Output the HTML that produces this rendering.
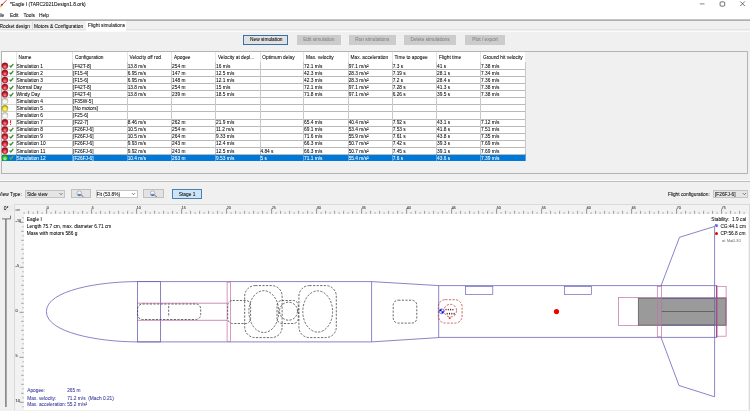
<!DOCTYPE html>
<html><head><meta charset="utf-8"><style>
html,body{margin:0;padding:0;width:750px;height:411px;overflow:hidden;background:#f0f0f0}
.t{position:absolute;font-family:"Liberation Sans",sans-serif;line-height:1;white-space:pre}
</style></head><body>
<div style="position:absolute;left:0.00px;top:0.00px;width:750.00px;height:19.00px;background:#fff"></div><div style="position:absolute;left:0.00px;top:19.00px;width:750.00px;height:1.00px;background:#c4c4c4"></div><div style="position:absolute;left:0.00px;top:20.00px;width:750.00px;height:1.00px;background:#b0b0b0"></div><div style="position:absolute;left:0.00px;top:21.00px;width:750.00px;height:390.00px;background:#f0f0f0"></div><div style="position:absolute;left:0.00px;top:29.00px;width:750.00px;height:1.00px;background:#e3e3e3"></div><div style="position:absolute;left:0.00px;top:31.00px;width:750.00px;height:1.00px;background:#fbfbfb"></div><div style="position:absolute;left:86.00px;top:21.00px;width:40.30px;height:10.00px;background:#fff"></div><div style="position:absolute;left:32.00px;top:22.00px;width:0.60px;height:8.00px;background:#d9d9d9"></div><div style="position:absolute;left:243.00px;top:35.00px;width:45.00px;height:9.50px;background:#e1e1e1;border:1px solid #3a6da4;box-sizing:border-box;box-shadow:inset 0 0 0 0.6px #dfeaf5"></div><div style="position:absolute;left:296.90px;top:35.00px;width:43.70px;height:9.50px;background:#cccccc"></div><div style="position:absolute;left:348.90px;top:35.00px;width:46.80px;height:9.50px;background:#cccccc"></div><div style="position:absolute;left:404.30px;top:35.00px;width:51.50px;height:9.50px;background:#cccccc"></div><div style="position:absolute;left:465.00px;top:35.00px;width:40.20px;height:9.50px;background:#cccccc"></div><div style="position:absolute;left:1.00px;top:51.00px;width:746.60px;height:122.70px;border:1px solid #b4b4b4;box-sizing:border-box"></div><div style="position:absolute;left:1.50px;top:52.20px;width:523.00px;height:10.10px;background:#fff"></div><div style="position:absolute;left:15.90px;top:52.20px;width:0.70px;height:10.10px;background:#e6e6e6"></div><div style="position:absolute;left:72.40px;top:52.20px;width:0.70px;height:10.10px;background:#e6e6e6"></div><div style="position:absolute;left:127.00px;top:52.20px;width:0.70px;height:10.10px;background:#e6e6e6"></div><div style="position:absolute;left:171.40px;top:52.20px;width:0.70px;height:10.10px;background:#e6e6e6"></div><div style="position:absolute;left:215.30px;top:52.20px;width:0.70px;height:10.10px;background:#e6e6e6"></div><div style="position:absolute;left:259.70px;top:52.20px;width:0.70px;height:10.10px;background:#e6e6e6"></div><div style="position:absolute;left:303.40px;top:52.20px;width:0.70px;height:10.10px;background:#e6e6e6"></div><div style="position:absolute;left:348.00px;top:52.20px;width:0.70px;height:10.10px;background:#e6e6e6"></div><div style="position:absolute;left:392.00px;top:52.20px;width:0.70px;height:10.10px;background:#e6e6e6"></div><div style="position:absolute;left:436.40px;top:52.20px;width:0.70px;height:10.10px;background:#e6e6e6"></div><div style="position:absolute;left:480.40px;top:52.20px;width:0.70px;height:10.10px;background:#e6e6e6"></div><div style="position:absolute;left:1.50px;top:62.00px;width:523.00px;height:0.60px;background:#dedede"></div><div style="position:absolute;left:1.50px;top:62.30px;width:523.00px;height:98.98px;background:#fff"></div><div style="position:absolute;left:1.50px;top:154.21px;width:523.00px;height:7.07px;background:#0078d7"></div><div style="position:absolute;left:1.50px;top:69.07px;width:14.70px;height:0.70px;background:#d4d4d4"></div><div style="position:absolute;left:16.20px;top:69.07px;width:508.80px;height:0.70px;background:#b9b9b9"></div><div style="position:absolute;left:1.50px;top:76.14px;width:14.70px;height:0.70px;background:#d4d4d4"></div><div style="position:absolute;left:16.20px;top:76.14px;width:508.80px;height:0.70px;background:#b9b9b9"></div><div style="position:absolute;left:1.50px;top:83.21px;width:14.70px;height:0.70px;background:#d4d4d4"></div><div style="position:absolute;left:16.20px;top:83.21px;width:508.80px;height:0.70px;background:#b9b9b9"></div><div style="position:absolute;left:1.50px;top:90.28px;width:14.70px;height:0.70px;background:#d4d4d4"></div><div style="position:absolute;left:16.20px;top:90.28px;width:508.80px;height:0.70px;background:#b9b9b9"></div><div style="position:absolute;left:1.50px;top:97.35px;width:14.70px;height:0.70px;background:#d4d4d4"></div><div style="position:absolute;left:16.20px;top:97.35px;width:508.80px;height:0.70px;background:#b9b9b9"></div><div style="position:absolute;left:1.50px;top:104.42px;width:14.70px;height:0.70px;background:#d4d4d4"></div><div style="position:absolute;left:16.20px;top:104.42px;width:508.80px;height:0.70px;background:#b9b9b9"></div><div style="position:absolute;left:1.50px;top:111.49px;width:14.70px;height:0.70px;background:#d4d4d4"></div><div style="position:absolute;left:16.20px;top:111.49px;width:508.80px;height:0.70px;background:#b9b9b9"></div><div style="position:absolute;left:1.50px;top:118.56px;width:14.70px;height:0.70px;background:#d4d4d4"></div><div style="position:absolute;left:16.20px;top:118.56px;width:508.80px;height:0.70px;background:#b9b9b9"></div><div style="position:absolute;left:1.50px;top:125.63px;width:14.70px;height:0.70px;background:#d4d4d4"></div><div style="position:absolute;left:16.20px;top:125.63px;width:508.80px;height:0.70px;background:#b9b9b9"></div><div style="position:absolute;left:1.50px;top:132.70px;width:14.70px;height:0.70px;background:#d4d4d4"></div><div style="position:absolute;left:16.20px;top:132.70px;width:508.80px;height:0.70px;background:#b9b9b9"></div><div style="position:absolute;left:1.50px;top:139.77px;width:14.70px;height:0.70px;background:#d4d4d4"></div><div style="position:absolute;left:16.20px;top:139.77px;width:508.80px;height:0.70px;background:#b9b9b9"></div><div style="position:absolute;left:1.50px;top:146.84px;width:14.70px;height:0.70px;background:#d4d4d4"></div><div style="position:absolute;left:16.20px;top:146.84px;width:508.80px;height:0.70px;background:#b9b9b9"></div><div style="position:absolute;left:1.50px;top:153.91px;width:14.70px;height:0.70px;background:#d4d4d4"></div><div style="position:absolute;left:16.20px;top:153.91px;width:508.80px;height:0.70px;background:#b9b9b9"></div><div style="position:absolute;left:15.90px;top:62.30px;width:0.70px;height:91.91px;background:#c8c8c8"></div><div style="position:absolute;left:72.40px;top:62.30px;width:0.70px;height:91.91px;background:#c8c8c8"></div><div style="position:absolute;left:127.00px;top:62.30px;width:0.70px;height:91.91px;background:#c8c8c8"></div><div style="position:absolute;left:171.40px;top:62.30px;width:0.70px;height:91.91px;background:#c8c8c8"></div><div style="position:absolute;left:215.30px;top:62.30px;width:0.70px;height:91.91px;background:#c8c8c8"></div><div style="position:absolute;left:259.70px;top:62.30px;width:0.70px;height:91.91px;background:#c8c8c8"></div><div style="position:absolute;left:303.40px;top:62.30px;width:0.70px;height:91.91px;background:#c8c8c8"></div><div style="position:absolute;left:348.00px;top:62.30px;width:0.70px;height:91.91px;background:#c8c8c8"></div><div style="position:absolute;left:392.00px;top:62.30px;width:0.70px;height:91.91px;background:#c8c8c8"></div><div style="position:absolute;left:436.40px;top:62.30px;width:0.70px;height:91.91px;background:#c8c8c8"></div><div style="position:absolute;left:480.40px;top:62.30px;width:0.70px;height:91.91px;background:#c8c8c8"></div><div style="position:absolute;left:524.70px;top:62.30px;width:0.70px;height:91.91px;background:#c8c8c8"></div><div style="position:absolute;left:15.90px;top:154.21px;width:0.70px;height:7.07px;background:#5a9fe0"></div><div style="position:absolute;left:72.40px;top:154.21px;width:0.70px;height:7.07px;background:#5a9fe0"></div><div style="position:absolute;left:127.00px;top:154.21px;width:0.70px;height:7.07px;background:#5a9fe0"></div><div style="position:absolute;left:171.40px;top:154.21px;width:0.70px;height:7.07px;background:#5a9fe0"></div><div style="position:absolute;left:215.30px;top:154.21px;width:0.70px;height:7.07px;background:#5a9fe0"></div><div style="position:absolute;left:259.70px;top:154.21px;width:0.70px;height:7.07px;background:#5a9fe0"></div><div style="position:absolute;left:303.40px;top:154.21px;width:0.70px;height:7.07px;background:#5a9fe0"></div><div style="position:absolute;left:348.00px;top:154.21px;width:0.70px;height:7.07px;background:#5a9fe0"></div><div style="position:absolute;left:392.00px;top:154.21px;width:0.70px;height:7.07px;background:#5a9fe0"></div><div style="position:absolute;left:436.40px;top:154.21px;width:0.70px;height:7.07px;background:#5a9fe0"></div><div style="position:absolute;left:480.40px;top:154.21px;width:0.70px;height:7.07px;background:#5a9fe0"></div><div style="position:absolute;left:524.70px;top:154.21px;width:0.70px;height:7.07px;background:#5a9fe0"></div><svg style="position:absolute;left:9px;top:63.30px" width="5" height="5" viewBox="0 0 5 5"><path d="M0.6 2.6 L1.8 4.0 L4.3 1.0" fill="none" stroke="#3a8e2e" stroke-width="1.2"/></svg><svg style="position:absolute;left:9px;top:70.37px" width="5" height="5" viewBox="0 0 5 5"><path d="M0.6 2.6 L1.8 4.0 L4.3 1.0" fill="none" stroke="#3a8e2e" stroke-width="1.2"/></svg><svg style="position:absolute;left:9px;top:77.44px" width="5" height="5" viewBox="0 0 5 5"><path d="M0.6 2.6 L1.8 4.0 L4.3 1.0" fill="none" stroke="#3a8e2e" stroke-width="1.2"/></svg><svg style="position:absolute;left:9px;top:84.51px" width="5" height="5" viewBox="0 0 5 5"><path d="M0.6 2.6 L1.8 4.0 L4.3 1.0" fill="none" stroke="#3a8e2e" stroke-width="1.2"/></svg><svg style="position:absolute;left:9px;top:91.58px" width="5" height="5" viewBox="0 0 5 5"><path d="M0.6 2.6 L1.8 4.0 L4.3 1.0" fill="none" stroke="#3a8e2e" stroke-width="1.2"/></svg><svg style="position:absolute;left:9px;top:126.93px" width="5" height="5" viewBox="0 0 5 5"><path d="M0.6 2.6 L1.8 4.0 L4.3 1.0" fill="none" stroke="#3a8e2e" stroke-width="1.2"/></svg><svg style="position:absolute;left:9px;top:134.00px" width="5" height="5" viewBox="0 0 5 5"><path d="M0.6 2.6 L1.8 4.0 L4.3 1.0" fill="none" stroke="#3a8e2e" stroke-width="1.2"/></svg><svg style="position:absolute;left:9px;top:141.07px" width="5" height="5" viewBox="0 0 5 5"><path d="M0.6 2.6 L1.8 4.0 L4.3 1.0" fill="none" stroke="#3a8e2e" stroke-width="1.2"/></svg><svg style="position:absolute;left:9px;top:148.14px" width="5" height="5" viewBox="0 0 5 5"><path d="M0.6 2.6 L1.8 4.0 L4.3 1.0" fill="none" stroke="#3a8e2e" stroke-width="1.2"/></svg><svg style="position:absolute;left:9px;top:155.21px" width="5" height="5" viewBox="0 0 5 5"><path d="M0.6 2.6 L1.8 4.0 L4.3 1.0" fill="none" stroke="#60b060" stroke-width="1.2"/></svg><svg style="position:absolute;left:0;top:0" width="20" height="170"><defs><radialGradient id="br" cx="0.5" cy="0.68" r="0.6"><stop offset="0" stop-color="#ff8a98"/><stop offset="0.55" stop-color="#d42a3a"/><stop offset="1" stop-color="#8a0c18"/></radialGradient><radialGradient id="bg" cx="0.5" cy="0.68" r="0.6"><stop offset="0" stop-color="#c0ffc0"/><stop offset="0.55" stop-color="#3ad04a"/><stop offset="1" stop-color="#1a8a24"/></radialGradient><radialGradient id="by" cx="0.5" cy="0.68" r="0.6"><stop offset="0" stop-color="#ffffb0"/><stop offset="0.55" stop-color="#f0e030"/><stop offset="1" stop-color="#a89a10"/></radialGradient><radialGradient id="bw" cx="0.5" cy="0.68" r="0.6"><stop offset="0" stop-color="#ffffff"/><stop offset="0.55" stop-color="#f4f4f4"/><stop offset="1" stop-color="#c0c0c0"/></radialGradient></defs><circle cx="4.9" cy="65.85" r="3.1" fill="url(#br)" stroke="#8a1018" stroke-width="0.4"/><circle cx="4.9" cy="72.92" r="3.1" fill="url(#br)" stroke="#8a1018" stroke-width="0.4"/><circle cx="4.9" cy="79.99" r="3.1" fill="url(#br)" stroke="#8a1018" stroke-width="0.4"/><circle cx="4.9" cy="87.06" r="3.1" fill="url(#br)" stroke="#8a1018" stroke-width="0.4"/><circle cx="4.9" cy="94.13" r="3.1" fill="url(#br)" stroke="#8a1018" stroke-width="0.4"/><circle cx="4.9" cy="101.20" r="3.1" fill="url(#bw)" stroke="#a0a0a0" stroke-width="0.4"/><circle cx="4.9" cy="108.27" r="3.1" fill="url(#by)" stroke="#8a8010" stroke-width="0.4"/><circle cx="4.9" cy="115.34" r="3.1" fill="url(#bw)" stroke="#a0a0a0" stroke-width="0.4"/><circle cx="4.9" cy="122.41" r="3.1" fill="url(#br)" stroke="#8a1018" stroke-width="0.4"/><rect x="10.1" y="120.16" width="1.0" height="3.1" fill="#e01a1a"/><rect x="10.1" y="123.86" width="1.0" height="1.0" fill="#e01a1a"/><circle cx="4.9" cy="129.48" r="3.1" fill="url(#br)" stroke="#8a1018" stroke-width="0.4"/><circle cx="4.9" cy="136.55" r="3.1" fill="url(#br)" stroke="#8a1018" stroke-width="0.4"/><circle cx="4.9" cy="143.62" r="3.1" fill="url(#br)" stroke="#8a1018" stroke-width="0.4"/><circle cx="4.9" cy="150.69" r="3.1" fill="url(#br)" stroke="#8a1018" stroke-width="0.4"/><circle cx="4.9" cy="157.76" r="3.1" fill="url(#bg)" stroke="#1a7a20" stroke-width="0.4"/></svg><div style="position:absolute;left:0.00px;top:180.00px;width:750.00px;height:0.80px;background:#fafafa"></div><div style="position:absolute;left:0.00px;top:181.30px;width:750.00px;height:1.20px;background:#bdbdbd"></div><div style="position:absolute;left:25.10px;top:189.70px;width:40.30px;height:8.80px;background:#e5e5e5;border:0.5px solid #c4c4c4;box-sizing:border-box"></div><div style="position:absolute;left:70.60px;top:189.40px;width:20.90px;height:9.10px;background:#e3e3e3;border:0.5px solid #c0c0c0;box-sizing:border-box"></div><div style="position:absolute;left:95.60px;top:189.70px;width:42.90px;height:8.80px;background:#fff;border:0.5px solid #c4c4c4;box-sizing:border-box"></div><div style="position:absolute;left:142.80px;top:189.40px;width:20.80px;height:9.10px;background:#e3e3e3;border:0.5px solid #c0c0c0;box-sizing:border-box"></div><div style="position:absolute;left:172.40px;top:189.40px;width:29.30px;height:9.30px;background:#cce4f7;border:0.7px solid #4f7fae;box-sizing:border-box"></div><div style="position:absolute;left:712.90px;top:189.60px;width:35.50px;height:8.80px;background:#e5e5e5;border:0.5px solid #c4c4c4;box-sizing:border-box"></div><div style="position:absolute;left:1.50px;top:204.50px;width:11.00px;height:7.50px;background:#ececec"></div><div style="position:absolute;left:14.20px;top:204.30px;width:734.00px;height:204.60px;background:#f2f2f2;border-left:0.6px solid #dadada;border-top:0.6px solid #dadada;border-right:0.6px solid #dadada"></div><div style="position:absolute;left:23.70px;top:214.00px;width:724.20px;height:195.50px;background:#fff"></div><svg style="position:absolute;left:0;top:0;will-change:transform" width="750" height="411" viewBox="0 0 750 411"><line x1="699.8" y1="3.9" x2="704.5" y2="3.9" stroke="#333" stroke-width="0.6"/><rect x="720.1" y="1.9" width="4.6" height="4.2" rx="0.8" fill="none" stroke="#333" stroke-width="0.7"/><path d="M740.3 1.5 L744.8 6 M744.8 1.5 L740.3 6" stroke="#333" stroke-width="0.7"/><path d="M1.6 5.2 L6.4 0.3" stroke="#b82828" stroke-width="0.9"/><path d="M1.2 5.6 L2.6 4.2" stroke="#8a1010" stroke-width="1.4"/><ellipse cx="0.5" cy="6.4" rx="1.3" ry="0.9" fill="#f0c040"/><path d="M59.5 193.1 L61 194.7 L62.5 193.1" fill="none" stroke="#333" stroke-width="0.6"/><path d="M132.0 193.1 L133.5 194.7 L135.0 193.1" fill="none" stroke="#333" stroke-width="0.6"/><path d="M742.9 193.1 L744.4 194.7 L745.9 193.1" fill="none" stroke="#333" stroke-width="0.6"/><defs><linearGradient id="mg" x1="0" y1="0" x2="0" y2="1"><stop offset="0" stop-color="#c8d4f0"/><stop offset="0.5" stop-color="#6a88d0"/><stop offset="1" stop-color="#12308a"/></linearGradient></defs><path d="M80.89999999999999 194.8 L83.5 196.9" stroke="#5a5a5a" stroke-width="0.8"/><circle cx="79.3" cy="193.2" r="2.3" fill="#f4f6fa" stroke="#777" stroke-width="0.45"/><path d="M77.0 193.4 A2.3 2.3 0 0 0 81.6 193.4 Z" fill="url(#mg)"/><path d="M154.2 194.8 L156.79999999999998 196.9" stroke="#5a5a5a" stroke-width="0.8"/><circle cx="152.6" cy="193.2" r="2.3" fill="#f4f6fa" stroke="#777" stroke-width="0.45"/><path d="M150.29999999999998 193.4 A2.3 2.3 0 0 0 154.9 193.4 Z" fill="url(#mg)"/><path d="M2 218.9 L10.5 218.9 L10.5 215.6" fill="none" stroke="#555" stroke-width="0.8"/><line x1="5.9" y1="219" x2="5.9" y2="407" stroke="#6a6a6a" stroke-width="1.3"/><line x1="24.10" y1="212.1" x2="24.10" y2="213.9" stroke="#777" stroke-width="0.6"/><line x1="28.60" y1="210.8" x2="28.60" y2="213.9" stroke="#666" stroke-width="0.6"/><line x1="33.10" y1="212.1" x2="33.10" y2="213.9" stroke="#777" stroke-width="0.6"/><line x1="37.60" y1="210.8" x2="37.60" y2="213.9" stroke="#666" stroke-width="0.6"/><line x1="42.10" y1="212.1" x2="42.10" y2="213.9" stroke="#777" stroke-width="0.6"/><line x1="46.60" y1="208.5" x2="46.60" y2="213.9" stroke="#555" stroke-width="0.6"/><line x1="51.10" y1="212.1" x2="51.10" y2="213.9" stroke="#777" stroke-width="0.6"/><line x1="55.60" y1="210.8" x2="55.60" y2="213.9" stroke="#666" stroke-width="0.6"/><line x1="60.10" y1="212.1" x2="60.10" y2="213.9" stroke="#777" stroke-width="0.6"/><line x1="64.60" y1="210.8" x2="64.60" y2="213.9" stroke="#666" stroke-width="0.6"/><line x1="69.10" y1="212.1" x2="69.10" y2="213.9" stroke="#777" stroke-width="0.6"/><line x1="73.60" y1="210.8" x2="73.60" y2="213.9" stroke="#666" stroke-width="0.6"/><line x1="78.10" y1="212.1" x2="78.10" y2="213.9" stroke="#777" stroke-width="0.6"/><line x1="82.60" y1="210.8" x2="82.60" y2="213.9" stroke="#666" stroke-width="0.6"/><line x1="87.10" y1="212.1" x2="87.10" y2="213.9" stroke="#777" stroke-width="0.6"/><line x1="91.60" y1="208.5" x2="91.60" y2="213.9" stroke="#555" stroke-width="0.6"/><line x1="96.10" y1="212.1" x2="96.10" y2="213.9" stroke="#777" stroke-width="0.6"/><line x1="100.60" y1="210.8" x2="100.60" y2="213.9" stroke="#666" stroke-width="0.6"/><line x1="105.10" y1="212.1" x2="105.10" y2="213.9" stroke="#777" stroke-width="0.6"/><line x1="109.60" y1="210.8" x2="109.60" y2="213.9" stroke="#666" stroke-width="0.6"/><line x1="114.10" y1="212.1" x2="114.10" y2="213.9" stroke="#777" stroke-width="0.6"/><line x1="118.60" y1="210.8" x2="118.60" y2="213.9" stroke="#666" stroke-width="0.6"/><line x1="123.10" y1="212.1" x2="123.10" y2="213.9" stroke="#777" stroke-width="0.6"/><line x1="127.60" y1="210.8" x2="127.60" y2="213.9" stroke="#666" stroke-width="0.6"/><line x1="132.10" y1="212.1" x2="132.10" y2="213.9" stroke="#777" stroke-width="0.6"/><line x1="136.60" y1="208.5" x2="136.60" y2="213.9" stroke="#555" stroke-width="0.6"/><line x1="141.10" y1="212.1" x2="141.10" y2="213.9" stroke="#777" stroke-width="0.6"/><line x1="145.60" y1="210.8" x2="145.60" y2="213.9" stroke="#666" stroke-width="0.6"/><line x1="150.10" y1="212.1" x2="150.10" y2="213.9" stroke="#777" stroke-width="0.6"/><line x1="154.60" y1="210.8" x2="154.60" y2="213.9" stroke="#666" stroke-width="0.6"/><line x1="159.10" y1="212.1" x2="159.10" y2="213.9" stroke="#777" stroke-width="0.6"/><line x1="163.60" y1="210.8" x2="163.60" y2="213.9" stroke="#666" stroke-width="0.6"/><line x1="168.10" y1="212.1" x2="168.10" y2="213.9" stroke="#777" stroke-width="0.6"/><line x1="172.60" y1="210.8" x2="172.60" y2="213.9" stroke="#666" stroke-width="0.6"/><line x1="177.10" y1="212.1" x2="177.10" y2="213.9" stroke="#777" stroke-width="0.6"/><line x1="181.60" y1="208.5" x2="181.60" y2="213.9" stroke="#555" stroke-width="0.6"/><line x1="186.10" y1="212.1" x2="186.10" y2="213.9" stroke="#777" stroke-width="0.6"/><line x1="190.60" y1="210.8" x2="190.60" y2="213.9" stroke="#666" stroke-width="0.6"/><line x1="195.10" y1="212.1" x2="195.10" y2="213.9" stroke="#777" stroke-width="0.6"/><line x1="199.60" y1="210.8" x2="199.60" y2="213.9" stroke="#666" stroke-width="0.6"/><line x1="204.10" y1="212.1" x2="204.10" y2="213.9" stroke="#777" stroke-width="0.6"/><line x1="208.60" y1="210.8" x2="208.60" y2="213.9" stroke="#666" stroke-width="0.6"/><line x1="213.10" y1="212.1" x2="213.10" y2="213.9" stroke="#777" stroke-width="0.6"/><line x1="217.60" y1="210.8" x2="217.60" y2="213.9" stroke="#666" stroke-width="0.6"/><line x1="222.10" y1="212.1" x2="222.10" y2="213.9" stroke="#777" stroke-width="0.6"/><line x1="226.60" y1="208.5" x2="226.60" y2="213.9" stroke="#555" stroke-width="0.6"/><line x1="231.10" y1="212.1" x2="231.10" y2="213.9" stroke="#777" stroke-width="0.6"/><line x1="235.60" y1="210.8" x2="235.60" y2="213.9" stroke="#666" stroke-width="0.6"/><line x1="240.10" y1="212.1" x2="240.10" y2="213.9" stroke="#777" stroke-width="0.6"/><line x1="244.60" y1="210.8" x2="244.60" y2="213.9" stroke="#666" stroke-width="0.6"/><line x1="249.10" y1="212.1" x2="249.10" y2="213.9" stroke="#777" stroke-width="0.6"/><line x1="253.60" y1="210.8" x2="253.60" y2="213.9" stroke="#666" stroke-width="0.6"/><line x1="258.10" y1="212.1" x2="258.10" y2="213.9" stroke="#777" stroke-width="0.6"/><line x1="262.60" y1="210.8" x2="262.60" y2="213.9" stroke="#666" stroke-width="0.6"/><line x1="267.10" y1="212.1" x2="267.10" y2="213.9" stroke="#777" stroke-width="0.6"/><line x1="271.60" y1="208.5" x2="271.60" y2="213.9" stroke="#555" stroke-width="0.6"/><line x1="276.10" y1="212.1" x2="276.10" y2="213.9" stroke="#777" stroke-width="0.6"/><line x1="280.60" y1="210.8" x2="280.60" y2="213.9" stroke="#666" stroke-width="0.6"/><line x1="285.10" y1="212.1" x2="285.10" y2="213.9" stroke="#777" stroke-width="0.6"/><line x1="289.60" y1="210.8" x2="289.60" y2="213.9" stroke="#666" stroke-width="0.6"/><line x1="294.10" y1="212.1" x2="294.10" y2="213.9" stroke="#777" stroke-width="0.6"/><line x1="298.60" y1="210.8" x2="298.60" y2="213.9" stroke="#666" stroke-width="0.6"/><line x1="303.10" y1="212.1" x2="303.10" y2="213.9" stroke="#777" stroke-width="0.6"/><line x1="307.60" y1="210.8" x2="307.60" y2="213.9" stroke="#666" stroke-width="0.6"/><line x1="312.10" y1="212.1" x2="312.10" y2="213.9" stroke="#777" stroke-width="0.6"/><line x1="316.60" y1="208.5" x2="316.60" y2="213.9" stroke="#555" stroke-width="0.6"/><line x1="321.10" y1="212.1" x2="321.10" y2="213.9" stroke="#777" stroke-width="0.6"/><line x1="325.60" y1="210.8" x2="325.60" y2="213.9" stroke="#666" stroke-width="0.6"/><line x1="330.10" y1="212.1" x2="330.10" y2="213.9" stroke="#777" stroke-width="0.6"/><line x1="334.60" y1="210.8" x2="334.60" y2="213.9" stroke="#666" stroke-width="0.6"/><line x1="339.10" y1="212.1" x2="339.10" y2="213.9" stroke="#777" stroke-width="0.6"/><line x1="343.60" y1="210.8" x2="343.60" y2="213.9" stroke="#666" stroke-width="0.6"/><line x1="348.10" y1="212.1" x2="348.10" y2="213.9" stroke="#777" stroke-width="0.6"/><line x1="352.60" y1="210.8" x2="352.60" y2="213.9" stroke="#666" stroke-width="0.6"/><line x1="357.10" y1="212.1" x2="357.10" y2="213.9" stroke="#777" stroke-width="0.6"/><line x1="361.60" y1="208.5" x2="361.60" y2="213.9" stroke="#555" stroke-width="0.6"/><line x1="366.10" y1="212.1" x2="366.10" y2="213.9" stroke="#777" stroke-width="0.6"/><line x1="370.60" y1="210.8" x2="370.60" y2="213.9" stroke="#666" stroke-width="0.6"/><line x1="375.10" y1="212.1" x2="375.10" y2="213.9" stroke="#777" stroke-width="0.6"/><line x1="379.60" y1="210.8" x2="379.60" y2="213.9" stroke="#666" stroke-width="0.6"/><line x1="384.10" y1="212.1" x2="384.10" y2="213.9" stroke="#777" stroke-width="0.6"/><line x1="388.60" y1="210.8" x2="388.60" y2="213.9" stroke="#666" stroke-width="0.6"/><line x1="393.10" y1="212.1" x2="393.10" y2="213.9" stroke="#777" stroke-width="0.6"/><line x1="397.60" y1="210.8" x2="397.60" y2="213.9" stroke="#666" stroke-width="0.6"/><line x1="402.10" y1="212.1" x2="402.10" y2="213.9" stroke="#777" stroke-width="0.6"/><line x1="406.60" y1="208.5" x2="406.60" y2="213.9" stroke="#555" stroke-width="0.6"/><line x1="411.10" y1="212.1" x2="411.10" y2="213.9" stroke="#777" stroke-width="0.6"/><line x1="415.60" y1="210.8" x2="415.60" y2="213.9" stroke="#666" stroke-width="0.6"/><line x1="420.10" y1="212.1" x2="420.10" y2="213.9" stroke="#777" stroke-width="0.6"/><line x1="424.60" y1="210.8" x2="424.60" y2="213.9" stroke="#666" stroke-width="0.6"/><line x1="429.10" y1="212.1" x2="429.10" y2="213.9" stroke="#777" stroke-width="0.6"/><line x1="433.60" y1="210.8" x2="433.60" y2="213.9" stroke="#666" stroke-width="0.6"/><line x1="438.10" y1="212.1" x2="438.10" y2="213.9" stroke="#777" stroke-width="0.6"/><line x1="442.60" y1="210.8" x2="442.60" y2="213.9" stroke="#666" stroke-width="0.6"/><line x1="447.10" y1="212.1" x2="447.10" y2="213.9" stroke="#777" stroke-width="0.6"/><line x1="451.60" y1="208.5" x2="451.60" y2="213.9" stroke="#555" stroke-width="0.6"/><line x1="456.10" y1="212.1" x2="456.10" y2="213.9" stroke="#777" stroke-width="0.6"/><line x1="460.60" y1="210.8" x2="460.60" y2="213.9" stroke="#666" stroke-width="0.6"/><line x1="465.10" y1="212.1" x2="465.10" y2="213.9" stroke="#777" stroke-width="0.6"/><line x1="469.60" y1="210.8" x2="469.60" y2="213.9" stroke="#666" stroke-width="0.6"/><line x1="474.10" y1="212.1" x2="474.10" y2="213.9" stroke="#777" stroke-width="0.6"/><line x1="478.60" y1="210.8" x2="478.60" y2="213.9" stroke="#666" stroke-width="0.6"/><line x1="483.10" y1="212.1" x2="483.10" y2="213.9" stroke="#777" stroke-width="0.6"/><line x1="487.60" y1="210.8" x2="487.60" y2="213.9" stroke="#666" stroke-width="0.6"/><line x1="492.10" y1="212.1" x2="492.10" y2="213.9" stroke="#777" stroke-width="0.6"/><line x1="496.60" y1="208.5" x2="496.60" y2="213.9" stroke="#555" stroke-width="0.6"/><line x1="501.10" y1="212.1" x2="501.10" y2="213.9" stroke="#777" stroke-width="0.6"/><line x1="505.60" y1="210.8" x2="505.60" y2="213.9" stroke="#666" stroke-width="0.6"/><line x1="510.10" y1="212.1" x2="510.10" y2="213.9" stroke="#777" stroke-width="0.6"/><line x1="514.60" y1="210.8" x2="514.60" y2="213.9" stroke="#666" stroke-width="0.6"/><line x1="519.10" y1="212.1" x2="519.10" y2="213.9" stroke="#777" stroke-width="0.6"/><line x1="523.60" y1="210.8" x2="523.60" y2="213.9" stroke="#666" stroke-width="0.6"/><line x1="528.10" y1="212.1" x2="528.10" y2="213.9" stroke="#777" stroke-width="0.6"/><line x1="532.60" y1="210.8" x2="532.60" y2="213.9" stroke="#666" stroke-width="0.6"/><line x1="537.10" y1="212.1" x2="537.10" y2="213.9" stroke="#777" stroke-width="0.6"/><line x1="541.60" y1="208.5" x2="541.60" y2="213.9" stroke="#555" stroke-width="0.6"/><line x1="546.10" y1="212.1" x2="546.10" y2="213.9" stroke="#777" stroke-width="0.6"/><line x1="550.60" y1="210.8" x2="550.60" y2="213.9" stroke="#666" stroke-width="0.6"/><line x1="555.10" y1="212.1" x2="555.10" y2="213.9" stroke="#777" stroke-width="0.6"/><line x1="559.60" y1="210.8" x2="559.60" y2="213.9" stroke="#666" stroke-width="0.6"/><line x1="564.10" y1="212.1" x2="564.10" y2="213.9" stroke="#777" stroke-width="0.6"/><line x1="568.60" y1="210.8" x2="568.60" y2="213.9" stroke="#666" stroke-width="0.6"/><line x1="573.10" y1="212.1" x2="573.10" y2="213.9" stroke="#777" stroke-width="0.6"/><line x1="577.60" y1="210.8" x2="577.60" y2="213.9" stroke="#666" stroke-width="0.6"/><line x1="582.10" y1="212.1" x2="582.10" y2="213.9" stroke="#777" stroke-width="0.6"/><line x1="586.60" y1="208.5" x2="586.60" y2="213.9" stroke="#555" stroke-width="0.6"/><line x1="591.10" y1="212.1" x2="591.10" y2="213.9" stroke="#777" stroke-width="0.6"/><line x1="595.60" y1="210.8" x2="595.60" y2="213.9" stroke="#666" stroke-width="0.6"/><line x1="600.10" y1="212.1" x2="600.10" y2="213.9" stroke="#777" stroke-width="0.6"/><line x1="604.60" y1="210.8" x2="604.60" y2="213.9" stroke="#666" stroke-width="0.6"/><line x1="609.10" y1="212.1" x2="609.10" y2="213.9" stroke="#777" stroke-width="0.6"/><line x1="613.60" y1="210.8" x2="613.60" y2="213.9" stroke="#666" stroke-width="0.6"/><line x1="618.10" y1="212.1" x2="618.10" y2="213.9" stroke="#777" stroke-width="0.6"/><line x1="622.60" y1="210.8" x2="622.60" y2="213.9" stroke="#666" stroke-width="0.6"/><line x1="627.10" y1="212.1" x2="627.10" y2="213.9" stroke="#777" stroke-width="0.6"/><line x1="631.60" y1="208.5" x2="631.60" y2="213.9" stroke="#555" stroke-width="0.6"/><line x1="636.10" y1="212.1" x2="636.10" y2="213.9" stroke="#777" stroke-width="0.6"/><line x1="640.60" y1="210.8" x2="640.60" y2="213.9" stroke="#666" stroke-width="0.6"/><line x1="645.10" y1="212.1" x2="645.10" y2="213.9" stroke="#777" stroke-width="0.6"/><line x1="649.60" y1="210.8" x2="649.60" y2="213.9" stroke="#666" stroke-width="0.6"/><line x1="654.10" y1="212.1" x2="654.10" y2="213.9" stroke="#777" stroke-width="0.6"/><line x1="658.60" y1="210.8" x2="658.60" y2="213.9" stroke="#666" stroke-width="0.6"/><line x1="663.10" y1="212.1" x2="663.10" y2="213.9" stroke="#777" stroke-width="0.6"/><line x1="667.60" y1="210.8" x2="667.60" y2="213.9" stroke="#666" stroke-width="0.6"/><line x1="672.10" y1="212.1" x2="672.10" y2="213.9" stroke="#777" stroke-width="0.6"/><line x1="676.60" y1="208.5" x2="676.60" y2="213.9" stroke="#555" stroke-width="0.6"/><line x1="681.10" y1="212.1" x2="681.10" y2="213.9" stroke="#777" stroke-width="0.6"/><line x1="685.60" y1="210.8" x2="685.60" y2="213.9" stroke="#666" stroke-width="0.6"/><line x1="690.10" y1="212.1" x2="690.10" y2="213.9" stroke="#777" stroke-width="0.6"/><line x1="694.60" y1="210.8" x2="694.60" y2="213.9" stroke="#666" stroke-width="0.6"/><line x1="699.10" y1="212.1" x2="699.10" y2="213.9" stroke="#777" stroke-width="0.6"/><line x1="703.60" y1="210.8" x2="703.60" y2="213.9" stroke="#666" stroke-width="0.6"/><line x1="708.10" y1="212.1" x2="708.10" y2="213.9" stroke="#777" stroke-width="0.6"/><line x1="712.60" y1="210.8" x2="712.60" y2="213.9" stroke="#666" stroke-width="0.6"/><line x1="717.10" y1="212.1" x2="717.10" y2="213.9" stroke="#777" stroke-width="0.6"/><line x1="721.60" y1="208.5" x2="721.60" y2="213.9" stroke="#555" stroke-width="0.6"/><line x1="726.10" y1="212.1" x2="726.10" y2="213.9" stroke="#777" stroke-width="0.6"/><line x1="730.60" y1="210.8" x2="730.60" y2="213.9" stroke="#666" stroke-width="0.6"/><line x1="735.10" y1="212.1" x2="735.10" y2="213.9" stroke="#777" stroke-width="0.6"/><line x1="739.60" y1="210.8" x2="739.60" y2="213.9" stroke="#666" stroke-width="0.6"/><line x1="744.10" y1="212.1" x2="744.10" y2="213.9" stroke="#777" stroke-width="0.6"/><line x1="22.4" y1="217.80" x2="23.7" y2="217.80" stroke="#777" stroke-width="0.6"/><line x1="19.5" y1="222.30" x2="23.7" y2="222.30" stroke="#555" stroke-width="0.6"/><line x1="22.4" y1="226.80" x2="23.7" y2="226.80" stroke="#777" stroke-width="0.6"/><line x1="21.2" y1="231.30" x2="23.7" y2="231.30" stroke="#666" stroke-width="0.6"/><line x1="22.4" y1="235.80" x2="23.7" y2="235.80" stroke="#777" stroke-width="0.6"/><line x1="21.2" y1="240.30" x2="23.7" y2="240.30" stroke="#666" stroke-width="0.6"/><line x1="22.4" y1="244.80" x2="23.7" y2="244.80" stroke="#777" stroke-width="0.6"/><line x1="21.2" y1="249.30" x2="23.7" y2="249.30" stroke="#666" stroke-width="0.6"/><line x1="22.4" y1="253.80" x2="23.7" y2="253.80" stroke="#777" stroke-width="0.6"/><line x1="21.2" y1="258.30" x2="23.7" y2="258.30" stroke="#666" stroke-width="0.6"/><line x1="22.4" y1="262.80" x2="23.7" y2="262.80" stroke="#777" stroke-width="0.6"/><line x1="19.5" y1="267.30" x2="23.7" y2="267.30" stroke="#555" stroke-width="0.6"/><line x1="22.4" y1="271.80" x2="23.7" y2="271.80" stroke="#777" stroke-width="0.6"/><line x1="21.2" y1="276.30" x2="23.7" y2="276.30" stroke="#666" stroke-width="0.6"/><line x1="22.4" y1="280.80" x2="23.7" y2="280.80" stroke="#777" stroke-width="0.6"/><line x1="21.2" y1="285.30" x2="23.7" y2="285.30" stroke="#666" stroke-width="0.6"/><line x1="22.4" y1="289.80" x2="23.7" y2="289.80" stroke="#777" stroke-width="0.6"/><line x1="21.2" y1="294.30" x2="23.7" y2="294.30" stroke="#666" stroke-width="0.6"/><line x1="22.4" y1="298.80" x2="23.7" y2="298.80" stroke="#777" stroke-width="0.6"/><line x1="21.2" y1="303.30" x2="23.7" y2="303.30" stroke="#666" stroke-width="0.6"/><line x1="22.4" y1="307.80" x2="23.7" y2="307.80" stroke="#777" stroke-width="0.6"/><line x1="19.5" y1="312.30" x2="23.7" y2="312.30" stroke="#555" stroke-width="0.6"/><line x1="22.4" y1="316.80" x2="23.7" y2="316.80" stroke="#777" stroke-width="0.6"/><line x1="21.2" y1="321.30" x2="23.7" y2="321.30" stroke="#666" stroke-width="0.6"/><line x1="22.4" y1="325.80" x2="23.7" y2="325.80" stroke="#777" stroke-width="0.6"/><line x1="21.2" y1="330.30" x2="23.7" y2="330.30" stroke="#666" stroke-width="0.6"/><line x1="22.4" y1="334.80" x2="23.7" y2="334.80" stroke="#777" stroke-width="0.6"/><line x1="21.2" y1="339.30" x2="23.7" y2="339.30" stroke="#666" stroke-width="0.6"/><line x1="22.4" y1="343.80" x2="23.7" y2="343.80" stroke="#777" stroke-width="0.6"/><line x1="21.2" y1="348.30" x2="23.7" y2="348.30" stroke="#666" stroke-width="0.6"/><line x1="22.4" y1="352.80" x2="23.7" y2="352.80" stroke="#777" stroke-width="0.6"/><line x1="19.5" y1="357.30" x2="23.7" y2="357.30" stroke="#555" stroke-width="0.6"/><line x1="22.4" y1="361.80" x2="23.7" y2="361.80" stroke="#777" stroke-width="0.6"/><line x1="21.2" y1="366.30" x2="23.7" y2="366.30" stroke="#666" stroke-width="0.6"/><line x1="22.4" y1="370.80" x2="23.7" y2="370.80" stroke="#777" stroke-width="0.6"/><line x1="21.2" y1="375.30" x2="23.7" y2="375.30" stroke="#666" stroke-width="0.6"/><line x1="22.4" y1="379.80" x2="23.7" y2="379.80" stroke="#777" stroke-width="0.6"/><line x1="21.2" y1="384.30" x2="23.7" y2="384.30" stroke="#666" stroke-width="0.6"/><line x1="22.4" y1="388.80" x2="23.7" y2="388.80" stroke="#777" stroke-width="0.6"/><line x1="21.2" y1="393.30" x2="23.7" y2="393.30" stroke="#666" stroke-width="0.6"/><line x1="22.4" y1="397.80" x2="23.7" y2="397.80" stroke="#777" stroke-width="0.6"/><line x1="19.5" y1="402.30" x2="23.7" y2="402.30" stroke="#555" stroke-width="0.6"/><line x1="22.4" y1="406.80" x2="23.7" y2="406.80" stroke="#777" stroke-width="0.6"/><g font-family="Liberation Sans" fill="#333" stroke="#333" stroke-width="0.08"><text x="46.70" y="209.1" font-size="3.6">0</text><text x="91.70" y="209.1" font-size="3.6">5</text><text x="136.70" y="209.1" font-size="3.6">10</text><text x="181.70" y="209.1" font-size="3.6">15</text><text x="226.70" y="209.1" font-size="3.6">20</text><text x="271.70" y="209.1" font-size="3.6">25</text><text x="316.70" y="209.1" font-size="3.6">30</text><text x="361.70" y="209.1" font-size="3.6">35</text><text x="406.70" y="209.1" font-size="3.6">40</text><text x="451.70" y="209.1" font-size="3.6">45</text><text x="496.70" y="209.1" font-size="3.6">50</text><text x="541.70" y="209.1" font-size="3.6">55</text><text x="586.70" y="209.1" font-size="3.6">60</text><text x="631.70" y="209.1" font-size="3.6">65</text><text x="676.70" y="209.1" font-size="3.6">70</text><text x="721.70" y="209.1" font-size="3.6">75</text><text x="15.6" y="221.70" font-size="3.9">-10</text><text x="15.6" y="266.70" font-size="3.9">-5</text><text x="15.6" y="311.70" font-size="3.9">0</text><text x="15.6" y="356.70" font-size="3.9">5</text><text x="15.6" y="401.70" font-size="3.9">10</text></g><path d="M137.4 281.6 C 100 281.6, 46.4 290, 46.4 311.6 C 46.4 333, 100 341.9, 137.4 341.9" fill="none" stroke="#6a66b8" stroke-width="0.8"/><path d="M137.4 281.6 L371.6 281.6 M137.4 341.9 L371.6 341.9 M371.6 281.6 L371.6 341.9" fill="none" stroke="#6a66b8" stroke-width="0.8"/><rect x="137.4" y="281.6" width="23" height="60.3" fill="none" stroke="#6a66b8" stroke-width="0.8"/><path d="M137.4 303.2 L227.2 303.2 M137.4 320.3 L227.2 320.3" stroke="#c070a8" stroke-width="0.8"/><rect x="227.1" y="282.1" width="3.5" height="59.3" fill="none" stroke="#c070a8" stroke-width="0.7"/><path d="M371.6 281.6 L438.7 285.6 L438.7 337.6 L371.6 341.9" fill="none" stroke="#6a66b8" stroke-width="0.8"/><path d="M438.7 285.6 L716.7 285.6 M438.7 337.4 L716.7 337.4 M716.7 285.6 L716.7 337.4" fill="none" stroke="#6a66b8" stroke-width="0.8"/><rect x="465.6" y="286.6" width="27.2" height="8" fill="none" stroke="#6a66b8" stroke-width="0.7"/><rect x="564.4" y="286.6" width="27.2" height="8" fill="none" stroke="#6a66b8" stroke-width="0.7"/><rect x="618.4" y="297.5" width="108" height="28.1" fill="none" stroke="#c070a8" stroke-width="0.7"/><rect x="638.3" y="298.2" width="87.5" height="26.9" fill="#9a9a9a" stroke="#555" stroke-width="0.7"/><line x1="661" y1="311.5" x2="715" y2="311.5" stroke="#555" stroke-width="0.8"/><path d="M661 298.5 L715 298.5 M661 325 L715 325" stroke="#5a56a0" stroke-width="0.7"/><rect x="657.3" y="286.6" width="4.3" height="50.2" fill="none" stroke="#c070a8" stroke-width="0.7"/><rect x="716.6" y="286.3" width="9.5" height="49.9" fill="none" stroke="#c070a8" stroke-width="0.7"/><line x1="716.8" y1="285.6" x2="716.8" y2="337.4" stroke="#a03070" stroke-width="0.9"/><path d="M661 285.9 L679.5 237.3 L714.6 226.4 L714.6 396.8 L679 385.5 L661 337.4" fill="none" stroke="#6a66b8" stroke-width="0.8"/><rect x="137.6" y="304" width="63.1" height="15.5" rx="5" fill="none" stroke="#3a3a3a" stroke-width="0.75" stroke-dasharray="2.2 1.4"/><line x1="168.7" y1="306" x2="168.7" y2="317" fill="none" stroke="#3a3a3a" stroke-width="0.75" stroke-dasharray="2.2 1.4"/><rect x="227.7" y="300.5" width="22.9" height="23" rx="5" fill="none" stroke="#3a3a3a" stroke-width="0.75" stroke-dasharray="2.2 1.4"/><rect x="244.7" y="285.6" width="37.4" height="52" rx="10.5" fill="none" stroke="#3a3a3a" stroke-width="0.75" stroke-dasharray="2.2 1.4"/><ellipse cx="263.8" cy="311.6" rx="14.9" ry="20.9" fill="none" stroke="#3a3a3a" stroke-width="0.75" stroke-dasharray="2.2 1.4"/><rect x="277" y="300.5" width="21.3" height="23" rx="5" fill="none" stroke="#3a3a3a" stroke-width="0.75" stroke-dasharray="2.2 1.4"/><circle cx="288.5" cy="311.2" r="9" fill="none" stroke="#3a3a3a" stroke-width="0.75" stroke-dasharray="2.2 1.4"/><rect x="298.9" y="285.6" width="37.4" height="52" rx="10.5" fill="none" stroke="#3a3a3a" stroke-width="0.75" stroke-dasharray="2.2 1.4"/><ellipse cx="317.7" cy="311.5" rx="14.9" ry="20.6" fill="none" stroke="#3a3a3a" stroke-width="0.75" stroke-dasharray="2.2 1.4"/><rect x="393.2" y="300.2" width="23.6" height="22.9" rx="5" fill="none" stroke="#3a3a3a" stroke-width="0.75" stroke-dasharray="2.2 1.4"/><rect x="438.3" y="299.7" width="23.8" height="23.4" rx="7" fill="none" stroke="#c83030" stroke-width="0.75" stroke-dasharray="2.2 1.4"/><circle cx="450.3" cy="310.6" r="6.3" fill="none" stroke="#c83030" stroke-width="0.75" stroke-dasharray="2.2 1.4"/><circle cx="441.6" cy="311.3" r="2.4" fill="#fff"/><path d="M441.6 311.3 L441.6 308.9 A2.4 2.4 0 0 0 439.2 311.3 Z M441.6 311.3 L441.6 313.7 A2.4 2.4 0 0 0 444 311.3 Z" fill="#1010d0"/><circle cx="441.6" cy="311.3" r="2.4" fill="none" stroke="#1010d0" stroke-width="0.5"/><ellipse cx="446.00" cy="309.6" rx="0.6" ry="0.9" fill="#5a1a1a"/><ellipse cx="447.20" cy="313.7" rx="0.6" ry="0.9" fill="#4a1a1a"/><ellipse cx="448.30" cy="309.6" rx="0.6" ry="0.9" fill="#5a1a1a"/><ellipse cx="449.50" cy="313.7" rx="0.6" ry="0.9" fill="#4a1a1a"/><ellipse cx="450.60" cy="309.6" rx="0.6" ry="0.9" fill="#5a1a1a"/><ellipse cx="451.80" cy="313.7" rx="0.6" ry="0.9" fill="#4a1a1a"/><ellipse cx="452.90" cy="309.6" rx="0.6" ry="0.9" fill="#5a1a1a"/><ellipse cx="454.10" cy="313.7" rx="0.6" ry="0.9" fill="#4a1a1a"/><ellipse cx="449.7" cy="318.1" rx="1" ry="0.9" fill="#d02020"/><circle cx="556.5" cy="311.6" r="2.6" fill="#ee0000"/><circle cx="716.3" cy="225.6" r="1.5" fill="#1a1ad0"/><path d="M716.3 225.6 L716.3 224.1 A1.5 1.5 0 0 1 717.8 225.6 Z M716.3 225.6 L716.3 227.1 A1.5 1.5 0 0 1 714.8 225.6 Z" fill="#c8c8f0"/><circle cx="716.5" cy="233.4" r="1.5" fill="#ee0000"/><g font-family="Liberation Sans" style="white-space:pre" stroke-width="0.05"><text x="10.00" y="6.40" font-size="4.9" fill="#000" stroke="#000" text-anchor="start">*Eagle I (TARC2021Design1.8.ork)</text><text x="-3.60" y="16.80" font-size="4.9" fill="#000" stroke="#000" text-anchor="start">File</text><text x="10.00" y="17.00" font-size="4.9" fill="#000" stroke="#000" text-anchor="start">Edit</text><text x="23.50" y="17.00" font-size="4.9" fill="#000" stroke="#000" text-anchor="start">Tools</text><text x="39.00" y="17.00" font-size="4.9" fill="#000" stroke="#000" text-anchor="start">Help</text><text x="-0.50" y="27.80" font-size="4.8" fill="#000" stroke="#000" text-anchor="start">Rocket design</text><text x="34.00" y="27.80" font-size="4.8" fill="#000" stroke="#000" text-anchor="start">Motors &amp; Configuration</text><text x="88.00" y="27.30" font-size="4.8" fill="#000" stroke="#000" text-anchor="start">Flight simulations</text><text x="250.00" y="41.30" font-size="4.8" fill="#000" stroke="#000" text-anchor="start">New simulation</text><text x="318.75" y="41.30" font-size="4.8" fill="#848484" stroke="#848484" text-anchor="middle">Edit simulation</text><text x="372.30" y="41.30" font-size="4.8" fill="#848484" stroke="#848484" text-anchor="middle">Run simulations</text><text x="430.05" y="41.30" font-size="4.8" fill="#848484" stroke="#848484" text-anchor="middle">Delete simulations</text><text x="485.10" y="41.30" font-size="4.8" fill="#848484" stroke="#848484" text-anchor="middle">Plot / export</text><text x="18.50" y="58.90" font-size="4.8" fill="#000" stroke="#000" text-anchor="start">Name</text><text x="75.00" y="58.90" font-size="4.8" fill="#000" stroke="#000" text-anchor="start">Configuration</text><text x="129.60" y="58.90" font-size="4.8" fill="#000" stroke="#000" text-anchor="start">Velocity off rod</text><text x="174.00" y="58.90" font-size="4.8" fill="#000" stroke="#000" text-anchor="start">Apogee</text><text x="217.90" y="58.90" font-size="4.8" fill="#000" stroke="#000" text-anchor="start">Velocity at depl...</text><text x="262.30" y="58.90" font-size="4.8" fill="#000" stroke="#000" text-anchor="start">Optimum delay</text><text x="306.00" y="58.90" font-size="4.8" fill="#000" stroke="#000" text-anchor="start">Max. velocity</text><text x="350.60" y="58.90" font-size="4.8" fill="#000" stroke="#000" text-anchor="start">Max. acceleration</text><text x="394.60" y="58.90" font-size="4.8" fill="#000" stroke="#000" text-anchor="start">Time to apogee</text><text x="439.00" y="58.90" font-size="4.8" fill="#000" stroke="#000" text-anchor="start">Flight time</text><text x="483.00" y="58.90" font-size="4.8" fill="#000" stroke="#000" text-anchor="start">Ground hit velocity</text><text x="16.60" y="67.70" font-size="4.8" fill="#000" stroke="#000" text-anchor="start">Simulation 1</text><text x="73.10" y="67.70" font-size="4.8" fill="#000" stroke="#000" text-anchor="start">[F42T-8]</text><text x="127.70" y="67.70" font-size="4.8" fill="#000" stroke="#000" text-anchor="start">13.8 m/s</text><text x="172.10" y="67.70" font-size="4.8" fill="#000" stroke="#000" text-anchor="start">254 m</text><text x="216.00" y="67.70" font-size="4.8" fill="#000" stroke="#000" text-anchor="start">16 m/s</text><text x="304.10" y="67.70" font-size="4.8" fill="#000" stroke="#000" text-anchor="start">72.1 m/s</text><text x="348.70" y="67.70" font-size="4.8" fill="#000" stroke="#000" text-anchor="start">97.1 m/s²</text><text x="392.70" y="67.70" font-size="4.8" fill="#000" stroke="#000" text-anchor="start">7.3 s</text><text x="437.10" y="67.70" font-size="4.8" fill="#000" stroke="#000" text-anchor="start">41 s</text><text x="481.10" y="67.70" font-size="4.8" fill="#000" stroke="#000" text-anchor="start">7.38 m/s</text><text x="16.60" y="74.77" font-size="4.8" fill="#000" stroke="#000" text-anchor="start">Simulation 2</text><text x="73.10" y="74.77" font-size="4.8" fill="#000" stroke="#000" text-anchor="start">[F15-4]</text><text x="127.70" y="74.77" font-size="4.8" fill="#000" stroke="#000" text-anchor="start">6.95 m/s</text><text x="172.10" y="74.77" font-size="4.8" fill="#000" stroke="#000" text-anchor="start">147 m</text><text x="216.00" y="74.77" font-size="4.8" fill="#000" stroke="#000" text-anchor="start">12.5 m/s</text><text x="304.10" y="74.77" font-size="4.8" fill="#000" stroke="#000" text-anchor="start">42.3 m/s</text><text x="348.70" y="74.77" font-size="4.8" fill="#000" stroke="#000" text-anchor="start">28.3 m/s²</text><text x="392.70" y="74.77" font-size="4.8" fill="#000" stroke="#000" text-anchor="start">7.19 s</text><text x="437.10" y="74.77" font-size="4.8" fill="#000" stroke="#000" text-anchor="start">28.1 s</text><text x="481.10" y="74.77" font-size="4.8" fill="#000" stroke="#000" text-anchor="start">7.34 m/s</text><text x="16.60" y="81.84" font-size="4.8" fill="#000" stroke="#000" text-anchor="start">Simulation 3</text><text x="73.10" y="81.84" font-size="4.8" fill="#000" stroke="#000" text-anchor="start">[F15-6]</text><text x="127.70" y="81.84" font-size="4.8" fill="#000" stroke="#000" text-anchor="start">6.95 m/s</text><text x="172.10" y="81.84" font-size="4.8" fill="#000" stroke="#000" text-anchor="start">148 m</text><text x="216.00" y="81.84" font-size="4.8" fill="#000" stroke="#000" text-anchor="start">12.1 m/s</text><text x="304.10" y="81.84" font-size="4.8" fill="#000" stroke="#000" text-anchor="start">42.3 m/s</text><text x="348.70" y="81.84" font-size="4.8" fill="#000" stroke="#000" text-anchor="start">28.3 m/s²</text><text x="392.70" y="81.84" font-size="4.8" fill="#000" stroke="#000" text-anchor="start">7.2 s</text><text x="437.10" y="81.84" font-size="4.8" fill="#000" stroke="#000" text-anchor="start">28.4 s</text><text x="481.10" y="81.84" font-size="4.8" fill="#000" stroke="#000" text-anchor="start">7.36 m/s</text><text x="16.60" y="88.91" font-size="4.8" fill="#000" stroke="#000" text-anchor="start">Normal Day</text><text x="73.10" y="88.91" font-size="4.8" fill="#000" stroke="#000" text-anchor="start">[F42T-8]</text><text x="127.70" y="88.91" font-size="4.8" fill="#000" stroke="#000" text-anchor="start">13.8 m/s</text><text x="172.10" y="88.91" font-size="4.8" fill="#000" stroke="#000" text-anchor="start">254 m</text><text x="216.00" y="88.91" font-size="4.8" fill="#000" stroke="#000" text-anchor="start">15 m/s</text><text x="304.10" y="88.91" font-size="4.8" fill="#000" stroke="#000" text-anchor="start">72.1 m/s</text><text x="348.70" y="88.91" font-size="4.8" fill="#000" stroke="#000" text-anchor="start">97.1 m/s²</text><text x="392.70" y="88.91" font-size="4.8" fill="#000" stroke="#000" text-anchor="start">7.28 s</text><text x="437.10" y="88.91" font-size="4.8" fill="#000" stroke="#000" text-anchor="start">41.3 s</text><text x="481.10" y="88.91" font-size="4.8" fill="#000" stroke="#000" text-anchor="start">7.38 m/s</text><text x="16.60" y="95.98" font-size="4.8" fill="#000" stroke="#000" text-anchor="start">Windy Day</text><text x="73.10" y="95.98" font-size="4.8" fill="#000" stroke="#000" text-anchor="start">[F42T-4]</text><text x="127.70" y="95.98" font-size="4.8" fill="#000" stroke="#000" text-anchor="start">13.8 m/s</text><text x="172.10" y="95.98" font-size="4.8" fill="#000" stroke="#000" text-anchor="start">239 m</text><text x="216.00" y="95.98" font-size="4.8" fill="#000" stroke="#000" text-anchor="start">18.5 m/s</text><text x="304.10" y="95.98" font-size="4.8" fill="#000" stroke="#000" text-anchor="start">71.8 m/s</text><text x="348.70" y="95.98" font-size="4.8" fill="#000" stroke="#000" text-anchor="start">97.1 m/s²</text><text x="392.70" y="95.98" font-size="4.8" fill="#000" stroke="#000" text-anchor="start">6.26 s</text><text x="437.10" y="95.98" font-size="4.8" fill="#000" stroke="#000" text-anchor="start">39.5 s</text><text x="481.10" y="95.98" font-size="4.8" fill="#000" stroke="#000" text-anchor="start">7.38 m/s</text><text x="16.60" y="103.05" font-size="4.8" fill="#000" stroke="#000" text-anchor="start">Simulation 4</text><text x="73.10" y="103.05" font-size="4.8" fill="#000" stroke="#000" text-anchor="start">[F35W-5]</text><text x="16.60" y="110.12" font-size="4.8" fill="#000" stroke="#000" text-anchor="start">Simulation 5</text><text x="73.10" y="110.12" font-size="4.8" fill="#000" stroke="#000" text-anchor="start">[No motors]</text><text x="16.60" y="117.19" font-size="4.8" fill="#000" stroke="#000" text-anchor="start">Simulation 6</text><text x="73.10" y="117.19" font-size="4.8" fill="#000" stroke="#000" text-anchor="start">[F25-6]</text><text x="16.60" y="124.26" font-size="4.8" fill="#000" stroke="#000" text-anchor="start">Simulation 7</text><text x="73.10" y="124.26" font-size="4.8" fill="#000" stroke="#000" text-anchor="start">[F22-7]</text><text x="127.70" y="124.26" font-size="4.8" fill="#000" stroke="#000" text-anchor="start">8.46 m/s</text><text x="172.10" y="124.26" font-size="4.8" fill="#000" stroke="#000" text-anchor="start">262 m</text><text x="216.00" y="124.26" font-size="4.8" fill="#000" stroke="#000" text-anchor="start">21.9 m/s</text><text x="304.10" y="124.26" font-size="4.8" fill="#000" stroke="#000" text-anchor="start">65.4 m/s</text><text x="348.70" y="124.26" font-size="4.8" fill="#000" stroke="#000" text-anchor="start">40.4 m/s²</text><text x="392.70" y="124.26" font-size="4.8" fill="#000" stroke="#000" text-anchor="start">7.92 s</text><text x="437.10" y="124.26" font-size="4.8" fill="#000" stroke="#000" text-anchor="start">43.1 s</text><text x="481.10" y="124.26" font-size="4.8" fill="#000" stroke="#000" text-anchor="start">7.12 m/s</text><text x="16.60" y="131.33" font-size="4.8" fill="#000" stroke="#000" text-anchor="start">Simulation 8</text><text x="73.10" y="131.33" font-size="4.8" fill="#000" stroke="#000" text-anchor="start">[F26FJ-6]</text><text x="127.70" y="131.33" font-size="4.8" fill="#000" stroke="#000" text-anchor="start">10.5 m/s</text><text x="172.10" y="131.33" font-size="4.8" fill="#000" stroke="#000" text-anchor="start">254 m</text><text x="216.00" y="131.33" font-size="4.8" fill="#000" stroke="#000" text-anchor="start">11.2 m/s</text><text x="304.10" y="131.33" font-size="4.8" fill="#000" stroke="#000" text-anchor="start">69.1 m/s</text><text x="348.70" y="131.33" font-size="4.8" fill="#000" stroke="#000" text-anchor="start">53.4 m/s²</text><text x="392.70" y="131.33" font-size="4.8" fill="#000" stroke="#000" text-anchor="start">7.53 s</text><text x="437.10" y="131.33" font-size="4.8" fill="#000" stroke="#000" text-anchor="start">41.8 s</text><text x="481.10" y="131.33" font-size="4.8" fill="#000" stroke="#000" text-anchor="start">7.51 m/s</text><text x="16.60" y="138.40" font-size="4.8" fill="#000" stroke="#000" text-anchor="start">Simulation 9</text><text x="73.10" y="138.40" font-size="4.8" fill="#000" stroke="#000" text-anchor="start">[F26FJ-6]</text><text x="127.70" y="138.40" font-size="4.8" fill="#000" stroke="#000" text-anchor="start">10.5 m/s</text><text x="172.10" y="138.40" font-size="4.8" fill="#000" stroke="#000" text-anchor="start">264 m</text><text x="216.00" y="138.40" font-size="4.8" fill="#000" stroke="#000" text-anchor="start">9.33 m/s</text><text x="304.10" y="138.40" font-size="4.8" fill="#000" stroke="#000" text-anchor="start">71.6 m/s</text><text x="348.70" y="138.40" font-size="4.8" fill="#000" stroke="#000" text-anchor="start">55.9 m/s²</text><text x="392.70" y="138.40" font-size="4.8" fill="#000" stroke="#000" text-anchor="start">7.61 s</text><text x="437.10" y="138.40" font-size="4.8" fill="#000" stroke="#000" text-anchor="start">43.8 s</text><text x="481.10" y="138.40" font-size="4.8" fill="#000" stroke="#000" text-anchor="start">7.35 m/s</text><text x="16.60" y="145.47" font-size="4.8" fill="#000" stroke="#000" text-anchor="start">Simulation 10</text><text x="73.10" y="145.47" font-size="4.8" fill="#000" stroke="#000" text-anchor="start">[F26FJ-6]</text><text x="127.70" y="145.47" font-size="4.8" fill="#000" stroke="#000" text-anchor="start">9.93 m/s</text><text x="172.10" y="145.47" font-size="4.8" fill="#000" stroke="#000" text-anchor="start">243 m</text><text x="216.00" y="145.47" font-size="4.8" fill="#000" stroke="#000" text-anchor="start">12.4 m/s</text><text x="304.10" y="145.47" font-size="4.8" fill="#000" stroke="#000" text-anchor="start">66.3 m/s</text><text x="348.70" y="145.47" font-size="4.8" fill="#000" stroke="#000" text-anchor="start">50.7 m/s²</text><text x="392.70" y="145.47" font-size="4.8" fill="#000" stroke="#000" text-anchor="start">7.42 s</text><text x="437.10" y="145.47" font-size="4.8" fill="#000" stroke="#000" text-anchor="start">39.3 s</text><text x="481.10" y="145.47" font-size="4.8" fill="#000" stroke="#000" text-anchor="start">7.69 m/s</text><text x="16.60" y="152.54" font-size="4.8" fill="#000" stroke="#000" text-anchor="start">Simulation 11</text><text x="73.10" y="152.54" font-size="4.8" fill="#000" stroke="#000" text-anchor="start">[F26FJ-6]</text><text x="127.70" y="152.54" font-size="4.8" fill="#000" stroke="#000" text-anchor="start">9.92 m/s</text><text x="172.10" y="152.54" font-size="4.8" fill="#000" stroke="#000" text-anchor="start">243 m</text><text x="216.00" y="152.54" font-size="4.8" fill="#000" stroke="#000" text-anchor="start">12.5 m/s</text><text x="260.40" y="152.54" font-size="4.8" fill="#000" stroke="#000" text-anchor="start">4.84 s</text><text x="304.10" y="152.54" font-size="4.8" fill="#000" stroke="#000" text-anchor="start">66.3 m/s</text><text x="348.70" y="152.54" font-size="4.8" fill="#000" stroke="#000" text-anchor="start">50.7 m/s²</text><text x="392.70" y="152.54" font-size="4.8" fill="#000" stroke="#000" text-anchor="start">7.45 s</text><text x="437.10" y="152.54" font-size="4.8" fill="#000" stroke="#000" text-anchor="start">39.1 s</text><text x="481.10" y="152.54" font-size="4.8" fill="#000" stroke="#000" text-anchor="start">7.69 m/s</text><text x="16.60" y="159.61" font-size="4.8" fill="#fff" stroke="#fff" text-anchor="start">Simulation 12</text><text x="73.10" y="159.61" font-size="4.8" fill="#fff" stroke="#fff" text-anchor="start">[F26FJ-6]</text><text x="127.70" y="159.61" font-size="4.8" fill="#fff" stroke="#fff" text-anchor="start">10.4 m/s</text><text x="172.10" y="159.61" font-size="4.8" fill="#fff" stroke="#fff" text-anchor="start">263 m</text><text x="216.00" y="159.61" font-size="4.8" fill="#fff" stroke="#fff" text-anchor="start">9.53 m/s</text><text x="260.40" y="159.61" font-size="4.8" fill="#fff" stroke="#fff" text-anchor="start">5 s</text><text x="304.10" y="159.61" font-size="4.8" fill="#fff" stroke="#fff" text-anchor="start">71.1 m/s</text><text x="348.70" y="159.61" font-size="4.8" fill="#fff" stroke="#fff" text-anchor="start">55.4 m/s²</text><text x="392.70" y="159.61" font-size="4.8" fill="#fff" stroke="#fff" text-anchor="start">7.6 s</text><text x="437.10" y="159.61" font-size="4.8" fill="#fff" stroke="#fff" text-anchor="start">43.6 s</text><text x="481.10" y="159.61" font-size="4.8" fill="#fff" stroke="#fff" text-anchor="start">7.39 m/s</text><text x="-1.50" y="196.00" font-size="4.8" fill="#000" stroke="#000" text-anchor="start">View Type:</text><text x="27.00" y="196.00" font-size="4.8" fill="#000" stroke="#000" text-anchor="start">Side view</text><text x="96.70" y="196.00" font-size="4.8" fill="#000" stroke="#000" text-anchor="start">Fit (53.8%)</text><text x="187.05" y="196.00" font-size="4.8" fill="#000" stroke="#000" text-anchor="middle">Stage 1</text><text x="667.90" y="195.90" font-size="4.8" fill="#000" stroke="#000" text-anchor="start">Flight configuration:</text><text x="715.00" y="195.90" font-size="4.8" fill="#000" stroke="#000" text-anchor="start">[F26FJ-6]</text><text x="3.70" y="210.30" font-size="5" fill="#000" stroke="#000" text-anchor="start">0°</text><text x="15.50" y="211.00" font-size="3.6" fill="#555" stroke="#555" text-anchor="start">cm</text><text x="27.20" y="392.10" font-size="4.8" fill="#34349a" stroke="#34349a" text-anchor="start">Apogee:</text><text x="67.20" y="392.10" font-size="4.8" fill="#34349a" stroke="#34349a" text-anchor="start">265 m</text><text x="27.20" y="399.50" font-size="4.8" fill="#34349a" stroke="#34349a" text-anchor="start">Max. velocity:</text><text x="67.20" y="399.50" font-size="4.8" fill="#34349a" stroke="#34349a" text-anchor="start">71.2 m/s &#160;(Mach 0.21)</text><text x="27.20" y="406.20" font-size="4.8" fill="#34349a" stroke="#34349a" text-anchor="start">Max. acceleration:</text><text x="67.20" y="406.20" font-size="4.8" fill="#34349a" stroke="#34349a" text-anchor="start">55.2 m/s²</text><text x="26.80" y="220.90" font-size="4.8" fill="#000" stroke="#000" text-anchor="start">Eagle I</text><text x="26.80" y="228.20" font-size="4.8" fill="#000" stroke="#000" text-anchor="start">Length 75.7 cm, max. diameter 6.71 cm</text><text x="26.80" y="235.00" font-size="4.8" fill="#000" stroke="#000" text-anchor="start">Mass with motors 586 g</text><text x="711.20" y="220.80" font-size="4.8" fill="#000" stroke="#000" text-anchor="start">Stability: &#160;1.9 cal</text><text x="720.40" y="228.10" font-size="4.8" fill="#000" stroke="#000" text-anchor="start">CG:44.1 cm</text><text x="720.40" y="235.30" font-size="4.8" fill="#000" stroke="#000" text-anchor="start">CP:56.8 cm</text><text x="722.00" y="242.00" font-size="4.2" fill="#888" stroke="#888" text-anchor="start">at M=0.30</text></g></svg>
</body></html>
